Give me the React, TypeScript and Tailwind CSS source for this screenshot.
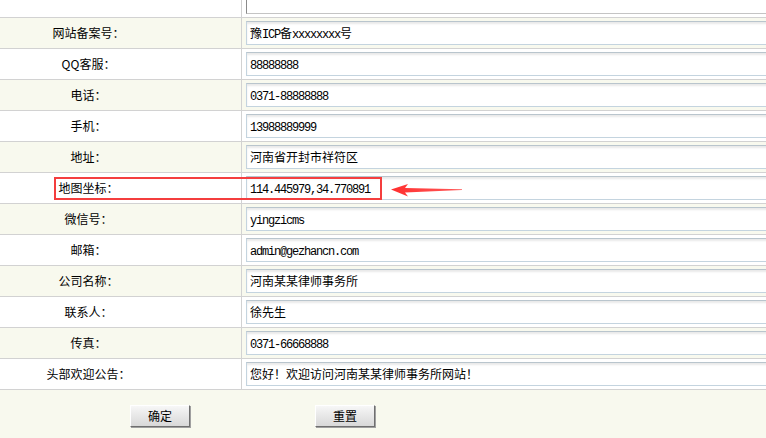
import React from "react";

const rows: [string, string][] = [
  ["网站备案号：", "豫ICP备xxxxxxxx号"],
  ["QQ客服：", "88888888"],
  ["电话：", "0371-88888888"],
  ["手机：", "13988889999"],
  ["地址：", "河南省开封市祥符区"],
  ["地图坐标：", "114.445979,34.770891"],
  ["微信号：", "yingzicms"],
  ["邮箱：", "admin@gezhancn.com"],
  ["公司名称：", "河南某某律师事务所"],
  ["联系人：", "徐先生"],
  ["传真：", "0371-66668888"],
  ["头部欢迎公告：", "您好！欢迎访问河南某某律师事务所网站！"],
];

function Val({ text }: { text: string }) {
  const parts = text.match(/[\x00-\x7f]+|[^\x00-\x7f]+/g) || [];
  return (
    <>
      {parts.map((p, i) =>
        /^[\x00-\x7f]+$/.test(p) ? (
          <span key={i} className="font-['Liberation_Mono',monospace] tracking-[-1.2px]">
            {p}
          </span>
        ) : (
          <span key={i}>{p}</span>
        )
      )}
    </>
  );
}

function Arrow() {
  return (
    <svg width="76" height="20" viewBox="0 0 76 20" className="absolute left-[388px] top-[7px]">
      <defs>
        <linearGradient id="ag" x1="0" x2="1" y1="0" y2="0">
          <stop offset="0" stopColor="#ff2f2f" />
          <stop offset="1" stopColor="#ff5a5a" />
        </linearGradient>
      </defs>
      <path d="M3 9.5 L20 4 L17 8 L74 9.2 L74 10 L17 12.5 L20 16.5 Z" fill="url(#ag)" />
    </svg>
  );
}

export default function App() {
  return (
    <div className="w-[766px] h-[438px] overflow-hidden bg-[#f8f9ee] text-black text-[12px] font-['Noto_Sans_CJK_SC',sans-serif]">
      <div className="flex h-[18px] bg-white border-b border-[#d2d2d2]">
        <div className="w-[242px] shrink-0 border-r border-[#d2d2d2]" />
        <div className="flex-1 flex items-end pl-[4px] pb-[3px]">
          <div className="w-[600px] h-[14px] shrink-0 border-l border-b border-l-[#8a8a8a] border-b-[#c4c4c4] bg-white" />
        </div>
      </div>
      {rows.map(([label, value], i) => (
        <div
          key={label}
          className={
            "relative flex h-[31px] border-b border-[#d2d2d2] " +
            (i % 2 === 0 ? "bg-[#f8f9ee]" : "bg-white")
          }
        >
          <div className="w-[242px] shrink-0 border-r border-[#d2d2d2] flex items-center justify-center pr-[64px]">
            <span>{label}</span>
          </div>
          <div className="flex-1 flex items-center pl-[4px]">
            <div className="w-[600px] h-[24px] shrink-0 border border-[#c4d4df] border-t-[#b9c5cd] bg-white shadow-[inset_0_2px_2px_rgba(0,0,0,0.09)] pl-[3px] leading-[22px] whitespace-nowrap overflow-hidden">
              <Val text={value} />
            </div>
          </div>
          {i === 5 && (
            <>
              <div className="absolute left-[54px] top-[4px] w-[328px] h-[23px] border-2 border-[#f43e3e]" />
              <Arrow />
            </>
          )}
        </div>
      ))}
      <div className="flex pt-[15px] pl-[130px] gap-[125px]">
        <button className="w-[60px] h-[22px] bg-gradient-to-b from-[#f7f7f7] to-[#d8d8d8] border border-t-white border-l-white border-r-[#6f6f6f] border-b-[#6f6f6f] shadow-[1px_1px_0_#a0a0a0] text-[12px] leading-[20px] text-black">
          确定
        </button>
        <button className="w-[60px] h-[22px] bg-gradient-to-b from-[#f7f7f7] to-[#d8d8d8] border border-t-white border-l-white border-r-[#6f6f6f] border-b-[#6f6f6f] shadow-[1px_1px_0_#a0a0a0] text-[12px] leading-[20px] text-black">
          重置
        </button>
      </div>
    </div>
  );
}
